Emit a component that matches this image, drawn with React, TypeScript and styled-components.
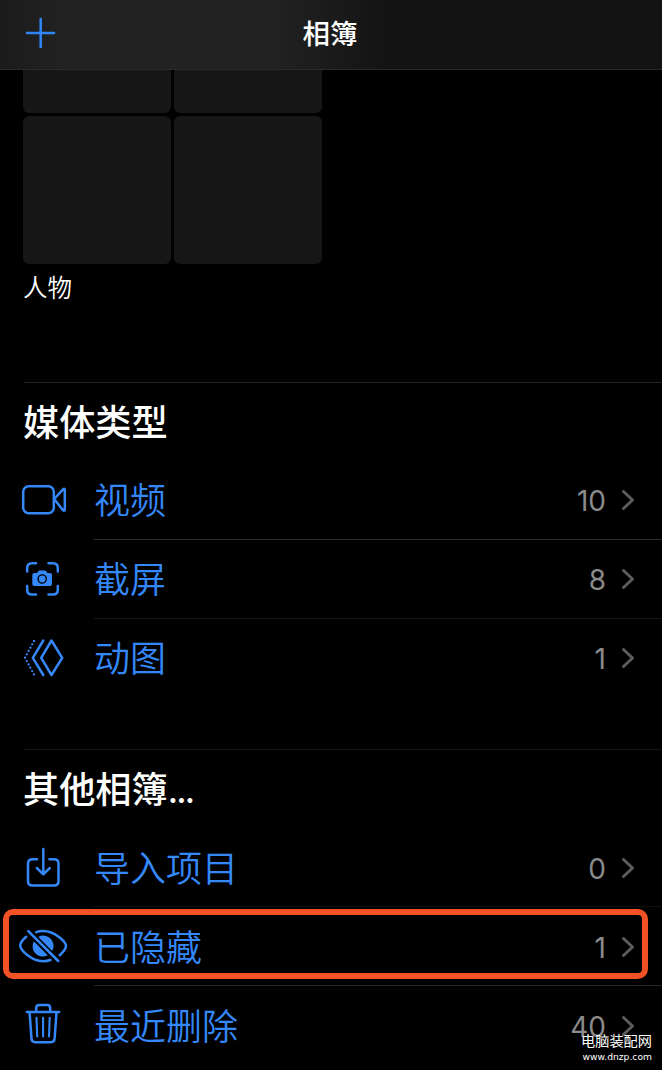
import React from "react";
import styled, { createGlobalStyle } from "styled-components";

const GlobalStyle = createGlobalStyle`
  * { box-sizing: border-box; }
  body {
    margin: 0;
    background: #000;
    color: #fff;
    font-family: Inter, "Noto Sans CJK SC", sans-serif;
    overflow: hidden;
  }
`;

const Screen = styled.main`
  position: relative;
  width: 662px;
  height: 1070px;
  overflow: hidden;
  background: #000;
`;

const NavBar = styled.header`
  display: grid;
  grid-template-columns: 1fr auto 1fr;
  align-items: center;
  height: 70px;
  padding: 0 25px 3px 23px;
  border-bottom: 1px solid #2a2a2a;
  background: linear-gradient(90deg, #1b1b1b 0, #222 70px, #222 270px, #131313 390px, #131313 100%);
`;

const NavTitle = styled.h1`
  margin: 0;
  padding-top: 1px;
  font-size: 27.5px;
  line-height: 40px;
  font-weight: 500;
`;

const AddButton = styled.button`
  display: flex;
  justify-self: start;
  padding: 0;
  border: 0;
  background: none;
  color: #2f86fb;
`;

const AlbumGrid = styled.div`
  display: grid;
  grid-template-columns: 148px 148px;
  gap: 3px;
  padding-left: 23px;
`;

const Thumb = styled.div<{ $cut?: boolean }>`
  height: ${(p) => (p.$cut ? 43 : 148)}px;
  border-radius: ${(p) => (p.$cut ? "0 0 6px 6px" : "6px")};
  background: #161616;
`;

const AlbumCaption = styled.p`
  margin: 6px 0 0 23px;
  height: 112px;
  font-size: 24.5px;
  line-height: 36px;
  font-weight: 350;
`;

const Section = styled.section<{ $height: number; $line: string }>`
  height: ${(p) => p.$height}px;
  &::before {
    content: "";
    display: block;
    height: 1px;
    margin-left: 24px;
    background: ${(p) => p.$line};
  }
`;

const SectionTitle = styled.h2<{ $height: number }>`
  margin: 0;
  padding: 14px 0 0 23px;
  height: ${(p) => p.$height}px;
  font-size: 36.2px;
  line-height: 52px;
  font-weight: 500;
`;

const Ellipsis = styled.span`
  font-size: 34px;
  letter-spacing: -1.8px;
`;

const Row = styled.div<{ $line?: string }>`
  position: relative;
  display: flex;
  align-items: center;
  height: 78.8px;
  padding: 0 27px 0 16px;
  &::after {
    content: "";
    position: absolute;
    left: 94px;
    right: 0;
    bottom: 0;
    height: 1px;
    background: ${(p) => p.$line ?? "transparent"};
  }
`;

const RowIcon = styled.svg`
  width: 54px;
  height: 60px;
  margin-right: 24px;
  fill: none;
  stroke: #3488fa;
  stroke-width: 2.5;
  stroke-linecap: round;
  stroke-linejoin: round;
`;

const Label = styled.span`
  flex: 1;
  padding-top: 2px;
  font-size: 36px;
  line-height: 52px;
  font-weight: 350;
  color: #3488fa;
`;

const Count = styled.span`
  margin-right: 14px;
  padding-top: 2px;
  font-size: 28px;
  line-height: 40px;
  font-weight: 400;
  color: #8b8b8b;
`;

const Highlight = styled.div`
  position: absolute;
  left: 3px;
  top: 2px;
  width: 645px;
  height: 70px;
  border: 6px solid #f15125;
  border-radius: 10px;
  z-index: 1;
`;

const Watermark = styled.div`
  position: absolute;
  right: 10px;
  bottom: 7px;
  display: flex;
  flex-direction: column;
  align-items: flex-end;
  color: #fff;
`;

const SiteName = styled.span`
  font-size: 14.2px;
  line-height: 18px;
`;

const SiteUrl = styled.span`
  font: 9.2px/13px "DejaVu Sans", sans-serif;
`;

const Chevron = () => (
  <svg width="15" height="24" viewBox="0 0 15 24" fill="none" stroke="#5c5c5e" strokeWidth="3" strokeLinecap="round" strokeLinejoin="round">
    <path d="M3.5 3.5 12.5 12 3.5 20.5" />
  </svg>
);

const icons = {
  video: (
    <>
      <rect x="7.2" y="16.2" width="30.6" height="27" rx="5.5" />
      <path d="M38.2 29 47 19.3Q48.8 18 48.8 20V39.5Q48.8 41.5 47 40.2Z" />
    </>
  ),
  screenshot: (
    <>
      <path d="M11.2 22.5V19Q11.2 14.2 16 14.2H20M32.5 14.2H37Q41.8 14.2 41.8 19V22.5M41.8 37V41Q41.8 45.5 37 45.5H32.5M20 45.5H16Q11.2 45.5 11.2 41V37" />
      <path fill="#3488fa" stroke="none" d="M18.5 24H21L23 21.5H29.5L31.5 24H34Q36 24 36 26V35Q36 37 34 37H18.5Q16.3 37 16.3 35V26Q16.3 24 18.5 24Z" />
      <circle cx="26.2" cy="30" r="4.1" stroke="#000" strokeWidth="1.4" />
    </>
  ),
  animated: (
    <>
      <path d="M35.5 12.5 46.2 29.8 35.5 47 25.2 29.8Z" strokeWidth="2.5" />
      <path d="M27.3 12.5 16.8 29.8 27.3 47" strokeWidth="2.5" />
      <path d="M18 13 9 29.8 18 46.5" strokeWidth="2.3" strokeDasharray="0 3.79" />
    </>
  ),
  imported: (
    <>
      <path d="M21 21.2H16.5Q12 21.2 12 25.7V43Q12 47.5 16.5 47.5H38Q42.5 47.5 42.5 43V25.7Q42.5 21.2 38 21.2H33.5" />
      <path d="M27.3 11V36M20.8 30 27.3 36.3 33.8 30" />
    </>
  ),
  hidden: (
    <>
      <path d="M10.2 19.8Q4.2 25 4.2 28.5C4.2 33 15.5 44.2 27 44.2Q31.2 44.2 34.5 43M20.3 15.2Q23.5 14 27 14C39 14 50 25 50 29Q50 32.5 43.7 38.2" />
      <path fill="#3488fa" stroke="none" d="M17.9 24.2A10.2 10.2 0 0 0 31.7 38.2ZM22.3 20A10.2 10.2 0 0 1 36.2 34Z" />
      <path d="M12.3 14.2 42.2 44" />
    </>
  ),
  trash: (
    <>
      <path d="M10.8 15.9H43.2M20.2 15.5V12Q20.2 8.9 23.3 8.9H31Q34.2 8.9 34.2 12V15.5" />
      <path d="M13.6 16.5 15.5 42.5Q15.7 46.2 19.2 46.2H34.8Q38.4 46.2 38.6 42.5L40.5 16.5" />
      <path d="M20.5 21.8 21.2 40.5M27.1 21.8V40.5M33.7 21.8 33 40.5" strokeWidth="2.1" />
    </>
  ),
};

type AlbumRowProps = {
  icon: keyof typeof icons;
  label: string;
  count: number;
  line?: string;
  highlighted?: boolean;
};

const AlbumRow = ({ icon, label, count, line, highlighted }: AlbumRowProps) => (
  <Row $line={line}>
    <RowIcon viewBox="0 0 54 60">{icons[icon]}</RowIcon>
    <Label>{label}</Label>
    <Count>{count}</Count>
    <Chevron />
    {highlighted && <Highlight />}
  </Row>
);

export default function App() {
  return (
    <Screen>
      <GlobalStyle />
      <NavBar>
        <AddButton aria-label="添加">
          <svg width="34" height="34" viewBox="0 0 34 34" fill="none" stroke="currentColor" strokeWidth="2.5" strokeLinecap="round">
            <path d="M4 17H31M17.7 3V31" />
          </svg>
        </AddButton>
        <NavTitle>相簿</NavTitle>
      </NavBar>
      <AlbumGrid>
        <Thumb $cut />
        <Thumb $cut />
        <Thumb />
        <Thumb />
      </AlbumGrid>
      <AlbumCaption>人物</AlbumCaption>
      <Section $height={367} $line="#252525">
        <SectionTitle $height={78}>媒体类型</SectionTitle>
        <AlbumRow icon="video" label="视频" count={10} line="#2b2b2b" />
        <AlbumRow icon="screenshot" label="截屏" count={8} line="#151515" />
        <AlbumRow icon="animated" label="动图" count={1} />
      </Section>
      <Section $height={321} $line="#141414">
        <SectionTitle $height={78.6}>
          其他相簿<Ellipsis>...</Ellipsis>
        </SectionTitle>
        <AlbumRow icon="imported" label="导入项目" count={0} line="#101010" />
        <AlbumRow icon="hidden" label="已隐藏" count={1} line="#262626" highlighted />
        <AlbumRow icon="trash" label="最近删除" count={40} />
      </Section>
      <Watermark>
        <SiteName>电脑装配网</SiteName>
        <SiteUrl>www.dnzp.com</SiteUrl>
      </Watermark>
    </Screen>
  );
}
